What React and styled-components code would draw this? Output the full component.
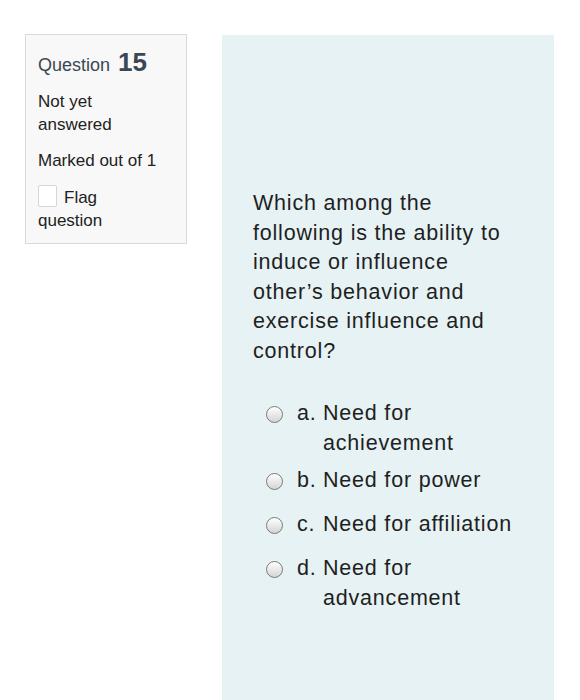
import React from "react"
import styled, { createGlobalStyle } from "styled-components"

const Global = createGlobalStyle`
body {
  margin: 0;
  background: #ffffff;
  font-family: "Liberation Sans", Arial, sans-serif;
}
`

const Page = styled.div`
display: flex;
align-items: flex-start;
gap: 35px;
padding: 34px 0 0 25px;
height: 700px;
box-sizing: border-box;
overflow: hidden;
`

const Info = styled.div`
width: 162px;
box-sizing: border-box;
background: #f8f8f8;
border: 1px solid #d9d9d9;
padding: 14px 24px 11px 12px;
color: #222;
`

const QNo = styled.h3`
margin: 0 0 12px 0;
font-weight: normal;
font-size: 18px;
color: #3b4752;
line-height: 26px;
white-space: nowrap;

span {
  font-weight: bold;
  font-size: 26px;
  margin-left: 8px;
}
`

const State = styled.div`
font-size: 17px;
line-height: 23px;
margin-bottom: 13px;
`

const Flag = styled.div`
font-size: 17px;
line-height: 23px;
`

const Box = styled.span`
display: inline-block;
width: 17px;
height: 20px;
border: 1px solid #d6d6d6;
border-radius: 2px;
background: #fff;
vertical-align: -4px;
margin-right: 7px;
`

const Content = styled.div`
width: 332px;
height: 666px;
box-sizing: border-box;
background: #e6f2f4;
margin-top: 1px;
padding: 154px 36px 0 31px;
color: #1f1f1f;
font-size: 21.5px;
letter-spacing: 0.8px;
`

const QText = styled.p`
margin: 0 0 32px 0;
line-height: 29.5px;
`

const Options = styled.div`
display: flex;
flex-direction: column;
gap: 7px;
padding-left: 13px;
`

const Option = styled.label`
display: flex;
align-items: flex-start;
min-height: 37px;
line-height: 30px;
`

const Radio = styled.span`
flex: none;
width: 15px;
height: 15px;
border-radius: 50%;
border: 1px solid #7a7a7a;
background: linear-gradient(#ffffff, #d4d4d4);
margin-top: 8px;
margin-right: 14px;
`

const Letter = styled.span`
flex: none;
width: 26px;
`

const Answer = styled.span`
flex: 1;
`

const options = [
    ["a.", "Need for achievement"],
    ["b.", "Need for power"],
    ["c.", "Need for affiliation"],
    ["d.", "Need for advancement"],
]

function App() {
    return (
        <Page>
            <Global />
            <Info>
                <QNo>Question<span>15</span></QNo>
                <State>Not yet answered</State>
                <State>Marked out of 1</State>
                <Flag><Box />Flag question</Flag>
            </Info>
            <Content>
                <QText>Which among the following is the ability to induce or influence other’s behavior and exercise influence and control?</QText>
                <Options>
                    {options.map(([l, t]) => (
                        <Option key={l}>
                            <Radio />
                            <Letter>{l}</Letter>
                            <Answer>{t}</Answer>
                        </Option>
                    ))}
                </Options>
            </Content>
        </Page>
    )
}

export default App
